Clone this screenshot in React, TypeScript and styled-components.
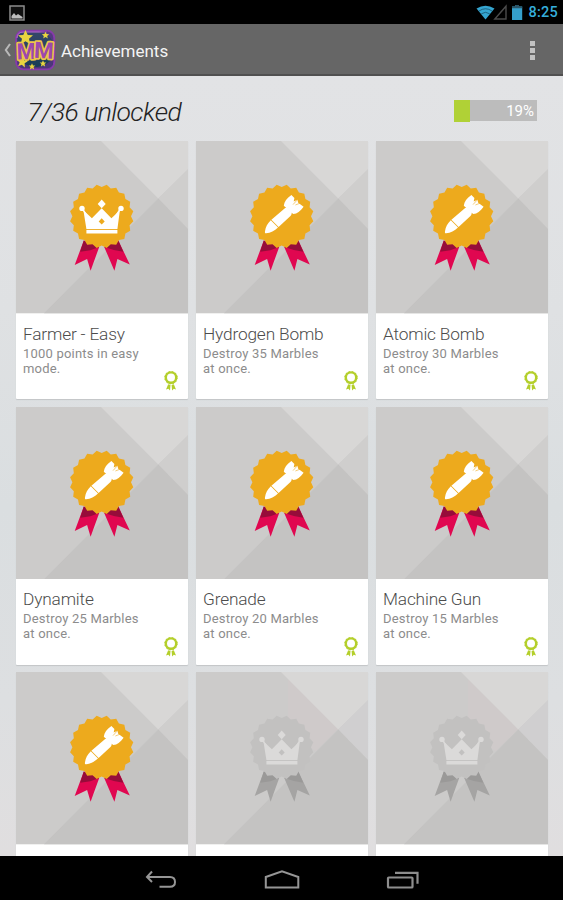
import React from "react";
import styled, { createGlobalStyle } from "styled-components";

const GlobalStyle = createGlobalStyle`
  *, *::before, *::after { box-sizing: border-box; }
  body { margin: 0; background: #000; }
`;

const Screen = styled.div`
  display: flex;
  flex-direction: column;
  width: 563px;
  height: 900px;
  overflow: hidden;
  font-family: Roboto, "Liberation Sans", sans-serif;
  background: #000;
`;

const StatusBar = styled.header`
  display: flex;
  align-items: center;
  flex: 0 0 24px;
  padding: 1px 5px 0 9px;
  color: #35aedb;
`;

const StatusIcons = styled.div`
  display: flex;
  align-items: center;
  margin-left: auto;
`;

const Clock = styled.span`
  margin-left: 4px;
  font-size: 14.5px;
  font-weight: 500;
  line-height: 23px;
  letter-spacing: 0.25px;
`;

const ActionBar = styled.nav`
  display: flex;
  align-items: center;
  flex: 0 0 52px;
  padding: 1px 25px 0 4px;
  background: #666;
  border-bottom: 2px solid #505050;
`;

const ActionTitle = styled.h1`
  margin: 0 auto 0 5px;
  padding-top: 2px;
  color: #f4f4f4;
  font-size: 17px;
  font-weight: 400;
  line-height: 22px;
  letter-spacing: 0;
`;

const OverflowButton = styled.button`
  display: flex;
  flex-direction: column;
  gap: 2px;
  width: 10px;
  padding: 1px 2px 0;
  border: 0;
  background: none;
`;

const Dot = styled.i`
  width: 5px;
  height: 5px;
  background: #c2c2c2;
`;

const Content = styled.main`
  flex: 0 0 780px;
  overflow: hidden;
  padding: 0 15px 0 15.5px;
  background: linear-gradient(180deg, #e2e3e5 0, #dfe1e3 30%, #dadee0 55%, #dddfe1 80%, #e0dedf 100%);
`;

const Summary = styled.section`
  display: flex;
  align-items: center;
  justify-content: space-between;
  height: 65.3px;
  padding: 4px 11px 0 12px;
`;

const Unlocked = styled.h2`
  margin: 0;
  padding-top: 2px;
  color: #222;
  font-size: 26.5px;
  font-style: italic;
  font-weight: 300;
  line-height: 34px;
  letter-spacing: -0.55px;
  white-space: nowrap;
`;

const Progress = styled.div`
  display: grid;
  grid-template-columns: 16px 1fr;
  width: 83px;
  height: 21px;
  background: #bcbcbc;
`;

const ProgressFill = styled.span`
  background: #b0d136;
`;

const ProgressLabel = styled.span`
  padding-right: 3px;
  color: #fff;
  font-size: 15px;
  line-height: 22px;
  text-align: right;
`;

const Grid = styled.section`
  display: grid;
  grid-template-columns: repeat(3, 172.5px);
  grid-auto-rows: 258px;
  gap: 7.5px;
`;

const Card = styled.article`
  display: flex;
  flex-direction: column;
  background: #fff;
  border-radius: 0 0 1px 1px;
  box-shadow: 0 1px 1px #c2c5c7;
`;

const CardArt = styled.svg`
  display: block;
  flex: 0 0 172.3px;
  width: 100%;
`;

const CardBody = styled.div`
  display: grid;
  grid-template-columns: 1fr 14px;
  grid-template-rows: 20px 1fr;
  flex: 1;
  padding: 10px 10px 8px 7.5px;
`;

const CardTitle = styled.h3`
  grid-column: 1 / -1;
  margin: 0;
  color: #4c4c4c;
  font-size: 17.3px;
  font-weight: 300;
  line-height: 20px;
  letter-spacing: -0.17px;
  white-space: nowrap;
`;

const CardText = styled.p`
  margin: 2px 0 0;
  color: #8c8c8c;
  font-size: 13px;
  font-weight: 400;
  line-height: 15px;
  letter-spacing: 0.2px;
  white-space: pre-line;
`;

const MiniBadge = styled.svg`
  align-self: end;
`;

const NavBar = styled.footer`
  display: grid;
  grid-template-columns: repeat(3, 120.5px);
  justify-content: center;
  justify-items: center;
  align-items: center;
  flex: 1;
  padding-top: 4px;
`;

type Emblem = "crown" | "bomb";

interface Achievement {
  title: string;
  text: string;
  emblem: Emblem;
  locked?: boolean;
}

const achievements: Achievement[] = [
  { title: "Farmer - Easy", text: "1000 points in easy\nmode.", emblem: "crown" },
  { title: "Hydrogen Bomb", text: "Destroy 35 Marbles\nat once.", emblem: "bomb" },
  { title: "Atomic Bomb", text: "Destroy 30 Marbles\nat once.", emblem: "bomb" },
  { title: "Dynamite", text: "Destroy 25 Marbles\nat once.", emblem: "bomb" },
  { title: "Grenade", text: "Destroy 20 Marbles\nat once.", emblem: "bomb" },
  { title: "Machine Gun", text: "Destroy 15 Marbles\nat once.", emblem: "bomb" },
  { title: "", text: "", emblem: "bomb" },
  { title: "", text: "", emblem: "crown", locked: true },
  { title: "", text: "", emblem: "crown", locked: true },
];

const TEETH = 20;
const sealPoints = Array.from({ length: TEETH * 2 }, (_, i) => {
  const radius = i % 2 ? 29.3 : 32;
  const angle = ((i + 1) * Math.PI) / TEETH - Math.PI / 2;
  return `${(86.3 + radius * Math.cos(angle)).toFixed(2)},${(75.6 + radius * Math.sin(angle)).toFixed(2)}`;
}).join(" ");

function Crown({ fill, seal }: { fill: string; seal: string }) {
  return (
    <g fill={fill}>
      <path d="M68 69.5 L76.5 77.5 L86.3 67.5 L96 77.5 L104.5 69.5 L102 88.3 H71Z" />
      <path d="M71 89.2 H102 V92.8 H71Z" />
      <path d="M86.3 58.9 L90.3 63.2 L86.3 67.5 L82.3 63.2Z" />
      <circle cx="66.6" cy="67.7" r="2.7" />
      <circle cx="105.6" cy="67.7" r="2.7" />
      <path d="M67 68 L72 76 M105 68 L100 76" stroke={fill} strokeWidth="1.5" />
      <path d="M86.3 77.6 L89.3 80.7 L86.3 83.8 L83.3 80.7Z" fill={seal} />
    </g>
  );
}

function Bomb() {
  return (
    <g fill="#fff">
      <path d="M76 79 L88 68.7 Q89.8 67 91.5 66.8 L96.5 71.8 Q96.3 74 94.8 75.5 L83.2 86.2Z" />
      <path d="M75.4 79.6 L82.6 86.8 C79.3 89.8 75 92.3 70.8 92.5 C69.4 92.6 69.4 91.9 69.6 90.5 C70.1 86.6 72.2 82.5 75.4 79.6Z" />
      <path d="M91.5 67.8 L88.4 65 C88.9 60.8 91.3 57.5 96 54.2 L99 57.3 L98.3 60.8 L102 59 L102.8 62 L108.2 66 C104.9 70.7 101.7 73 98 73.4 L95 71.2Z" />
      <path d="M97.6 63.9 L101.8 59.3" stroke="#edaa1d" strokeWidth=".6" />
      <path d="M100 64.3 L104.6 62.5" stroke="#edaa1d" strokeWidth=".6" />
    </g>
  );
}

function AchievementArt({ emblem, locked }: Pick<Achievement, "emblem" | "locked">) {
  const seal = locked ? "#c2c1c0" : "#edaa1d";
  const ribbon = locked ? "#a5a4a3" : "#e00750";
  const fold = locked ? "#9a9998" : "#960c3a";
  return (
    <CardArt viewBox="0 0 172.5 172.3" preserveAspectRatio="none" aria-hidden="true">
      <rect width="172.5" height="172.3" fill="#cccbca" />
      {locked && <path d="M92 0 L142.3 57.4 L120 79.5 L92 60Z" fill="#cfcaca" />}
      <path d="M85 0 H172.5 V27.7 L142.3 57.4Z" fill="#d8d7d6" />
      <path d="M172.5 27.7 V88.5 L142.3 57.4Z" fill={locked ? "#d0cfd0" : "#cfcecd"} />
      <path d="M142.3 57.4 L172.5 88.5 V172.3 H28Z" fill="#c4c3c2" />
      <g transform="translate(-.6 -.3)">
        <g fill={ribbon}>
          <path d="M68.4 99.8 L83.8 106.3 L75.2 130 L71.7 118.3 L59.3 124.2Z" />
          <path d="M102.9 99.8 L88.8 106.3 L99 130 L102 118.3 L114.4 123.7Z" />
        </g>
        <g fill={fold}>
          <path d="M68.4 99.8 L83.8 106.3 L75 109.5 L64.8 111Z" />
          <path d="M102.9 99.8 L88.8 106.3 L98.5 109.3 L107.9 111Z" />
        </g>
        <polygon points={sealPoints} fill={seal} />
        {emblem === "crown" ? <Crown fill={locked ? "#dbdad9" : "#fff"} seal={seal} /> : <Bomb />}
      </g>
    </CardArt>
  );
}

function UnlockedIcon() {
  return (
    <MiniBadge width="14" height="20" viewBox="0 0 14 20" aria-label="Unlocked">
      <circle cx="7" cy="6.6" r="5.2" fill="none" stroke="#b4cf2b" strokeWidth="2.4" />
      <circle cx="7" cy="6.6" r="6.3" fill="none" stroke="#b4cf2b" strokeWidth="1" strokeDasharray="1.65 1.65" />
      <path d="M4.2 13.2 L6.5 14 L6 19.6 L4.4 17.8 L2 18.6Z M9.8 13.2 L7.6 14 L8.1 19.6 L9.8 17.8 L12 18.6Z" fill="#b4cf2b" />
    </MiniBadge>
  );
}

function PictureIcon() {
  return (
    <svg width="16" height="16" viewBox="0 0 16 16" aria-hidden="true">
      <rect x="1" y="1" width="14" height="14" fill="#111" stroke="#8c8c8c" strokeWidth="1.5" />
      <path d="M2.5 13.5 V11 L5 8 L7 10.5 L9 9 L13.5 12 V13.5Z" fill="#bdbdbd" />
    </svg>
  );
}

function SignalIcons() {
  return (
    <svg width="48" height="17" viewBox="0 0 48 17" aria-hidden="true">
      <path d="M.5 4.5 Q9.5 -1.2 18.5 4.5 L9.5 15.5Z" fill="#35a5d0" />
      <path d="M3 7 Q9.5 2.5 16 7 M5.3 9.8 Q9.5 6.8 13.7 9.8" fill="none" stroke="#16516b" strokeWidth=".8" />
      <path d="M30 2.2 V15 H18.8Z" fill="none" stroke="#4b4b4b" strokeWidth="1.4" />
      <path d="M36 2.5 H39.3 V1 H43 V2.5 H46.2 V16 H36Z" fill="#359fcb" />
      <path d="M36 2.5 H39.3 V1 H43 V2.5 H46.2 V4.2 H36Z" fill="#2b5467" />
    </svg>
  );
}

function BackChevron() {
  return (
    <svg width="8" height="16" viewBox="0 0 8 16" aria-hidden="true">
      <path d="M6 2 L1.8 8 L6 14" fill="none" stroke="#b9b9b9" strokeWidth="2" />
    </svg>
  );
}

const star = "M0 -6 L1.8 -2 L6 -1.8 L2.8 1 L3.8 5.4 L0 3 L-3.8 5.4 L-2.8 1 L-6 -1.8 L-1.8 -2Z";

function GameLogo() {
  return (
    <svg width="44" height="42" viewBox="0 0 44 42" aria-label="MM">
      <defs>
        <linearGradient id="night" x2="0" y2="1">
          <stop stopColor="#35476b" />
          <stop offset="1" stopColor="#173c55" />
        </linearGradient>
      </defs>
      <rect x="4.2" y="1.8" width="38" height="38.5" rx="7" fill="url(#night)" stroke="#873baa" strokeWidth="2" />
      <path d="M5 9 Q5 3 12 3 H35" fill="none" stroke="#bd6bd5" strokeWidth="1" />
      <path d="M27 3 Q38 5 41 13 V6 Q38 2 33 2Z M5 27 V34 Q6 39 12 40 H37 Q42 38 41 28 Q36 37 25 38 Q11 38 5 27Z" fill="#6e3292" opacity=".6" />
      <g fill="#e9d540">
        <path d={star} transform="translate(13.5 8.5) scale(1.25)" />
        <path d={star} transform="translate(33.5 6.3) scale(.6)" />
        <path d={star} transform="translate(10.3 33) rotate(10) scale(.9)" />
        <path d={star} transform="translate(20 37.5) scale(.55)" />
        <path d={star} transform="translate(31 34.5) scale(.55)" />
      </g>
      <g
        fontFamily="Roboto, sans-serif"
        fontSize="22.5"
        fontWeight="700"
        fill="#9d48ad"
        stroke="#ecc54a"
        strokeWidth="3.4"
        paintOrder="stroke"
        strokeLinejoin="round"
      >
        <text x="4.8" y="30.3" textLength="19" lengthAdjust="spacingAndGlyphs" transform="rotate(-2 14 22)">M</text>
        <text x="22" y="29.3" textLength="19.5" lengthAdjust="spacingAndGlyphs" transform="rotate(3 31 22)">M</text>
      </g>
    </svg>
  );
}

function BackIcon() {
  return (
    <svg width="32" height="20" viewBox="0 0 32 20" fill="none" stroke="#969696" strokeWidth="2" aria-label="Back">
      <path d="M2 7 H25 Q30 7 30 12 Q30 16.8 25 16.8 H14.5 M7 1.5 L2 7 L7 12" />
    </svg>
  );
}

function HomeIcon() {
  return (
    <svg width="36" height="20" viewBox="0 0 36 20" fill="none" stroke="#969696" strokeWidth="2" aria-label="Home">
      <path d="M1.8 7 L18 1.3 L34.3 7 V17.5 H1.8Z" />
    </svg>
  );
}

function RecentsIcon() {
  return (
    <svg width="34" height="20" viewBox="0 0 34 20" fill="none" stroke="#8e8e8e" strokeWidth="2.2" aria-label="Recent apps">
      <rect x="3" y="7.5" width="24.5" height="10" rx=".8" />
      <path d="M10 2.8 H32.5 V13.8" />
    </svg>
  );
}

export default function App() {
  return (
    <>
      <GlobalStyle />
      <Screen>
        <StatusBar>
          <PictureIcon />
          <StatusIcons>
            <SignalIcons />
            <Clock>8:25</Clock>
          </StatusIcons>
        </StatusBar>
        <ActionBar>
          <BackChevron />
          <GameLogo />
          <ActionTitle>Achievements</ActionTitle>
          <OverflowButton aria-label="More options">
            <Dot />
            <Dot />
            <Dot />
          </OverflowButton>
        </ActionBar>
        <Content>
          <Summary>
            <Unlocked>7/36 unlocked</Unlocked>
            <Progress>
              <ProgressFill />
              <ProgressLabel>19%</ProgressLabel>
            </Progress>
          </Summary>
          <Grid>
            {achievements.map((item, index) => (
              <Card key={index}>
                <AchievementArt emblem={item.emblem} locked={item.locked} />
                {item.title && (
                  <CardBody>
                    <CardTitle>{item.title}</CardTitle>
                    <CardText>{item.text}</CardText>
                    <UnlockedIcon />
                  </CardBody>
                )}
              </Card>
            ))}
          </Grid>
        </Content>
        <NavBar>
          <BackIcon />
          <HomeIcon />
          <RecentsIcon />
        </NavBar>
      </Screen>
    </>
  );
}
